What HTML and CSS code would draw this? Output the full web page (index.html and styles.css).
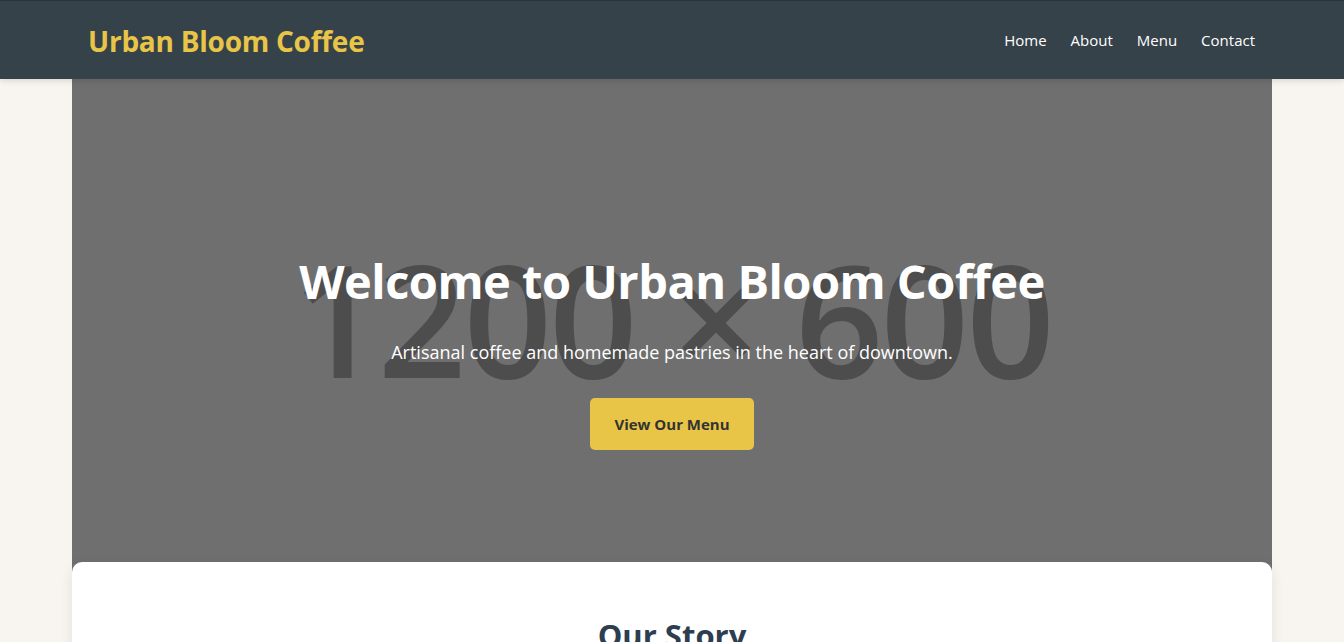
FILE: index.html
```html
<!DOCTYPE html>
<html lang="en">
<head>
<meta charset="utf-8">
<title>Urban Bloom Coffee</title>
<link rel="stylesheet" href="styles.css">
</head>
<body>
<header class="site-header">
  <div class="header-inner">
    <a class="logo" href="#">Urban Bloom Coffee</a>
    <nav class="nav">
      <a href="#">Home</a>
      <a href="#">About</a>
      <a href="#">Menu</a>
      <a href="#">Contact</a>
    </nav>
  </div>
</header>
<main class="main">
  <section class="hero">
    <div class="hero-placeholder" aria-hidden="true">1200 × 600</div>
    <div class="hero-content">
      <h1 class="hero-title">Welcome to Urban Bloom Coffee</h1>
      <p class="hero-sub">Artisanal coffee and homemade pastries in the heart of downtown.</p>
      <a class="btn" href="#">View Our Menu</a>
    </div>
  </section>
  <section class="card">
    <h2 class="card-title">Our Story</h2>
  </section>
</main>
</body>
</html>
```
FILE: styles.css
```css
* { box-sizing: border-box; }
html, body { margin: 0; padding: 0; }
body {
  background: #f8f5f0;
  font-family: "Open Sans", "Noto Sans", sans-serif;
  color: #333;
  overflow: hidden;
}
a { text-decoration: none; }

.site-header {
  background: #36424a;
  border-top: 1px solid #2a3338;
  height: 79px;
  box-shadow: 0 2px 6px rgba(0,0,0,0.12);
  position: relative;
  z-index: 2;
}
.header-inner {
  max-width: 1200px;
  margin: 0 auto;
  height: 100%;
  padding: 0 17px 0 16px;
  display: flex;
  align-items: center;
  justify-content: space-between;
}
.logo {
  color: #e8c547;
  font-weight: 700;
  font-size: 28px;
  letter-spacing: -0.25px;
  margin-top: 2px;
}
.nav {
  display: flex;
  gap: 24px;
}
.nav a {
  color: #ffffff;
  font-size: 15px;
}

.main {
  max-width: 1200px;
  margin: 0 auto;
}
.hero {
  position: relative;
  height: 500px;
  background: #6f6f6f;
  overflow: hidden;
  display: flex;
  justify-content: center;
  padding-top: 174px;
}
.hero-placeholder {
  position: absolute;
  left: 0; right: 0; top: 161px;
  text-align: center;
  font-family: "Open Sans", sans-serif;
  font-size: 155px;
  font-weight: 600;
  line-height: 1;
  color: #4d4d4d;
  letter-spacing: -3px;
}
.hero-content {
  position: relative;
  text-align: center;
  color: #fff;
}
.hero-title {
  margin: 0;
  font-size: 47px;
  font-weight: 700;
  line-height: 1.2;
  letter-spacing: -0.5px;
}
.hero-sub {
  margin: 31px 0 0;
  font-size: 18px;
}
.btn {
  display: inline-block;
  margin-top: 34px;
  background: #e8c547;
  color: #333;
  font-weight: 700;
  font-size: 15px;
  padding: 16px 24px;
  border-radius: 5px;
}

.card {
  position: relative;
  margin-top: -17px;
  background: #fff;
  border-radius: 10px;
  box-shadow: 0 4px 14px rgba(0,0,0,0.08);
  padding: 52px 40px 60px;
  text-align: center;
  min-height: 300px;
}
.card-title {
  margin: 0;
  font-size: 31px;
  color: #2c3e50;
  font-weight: 700;
}
```
